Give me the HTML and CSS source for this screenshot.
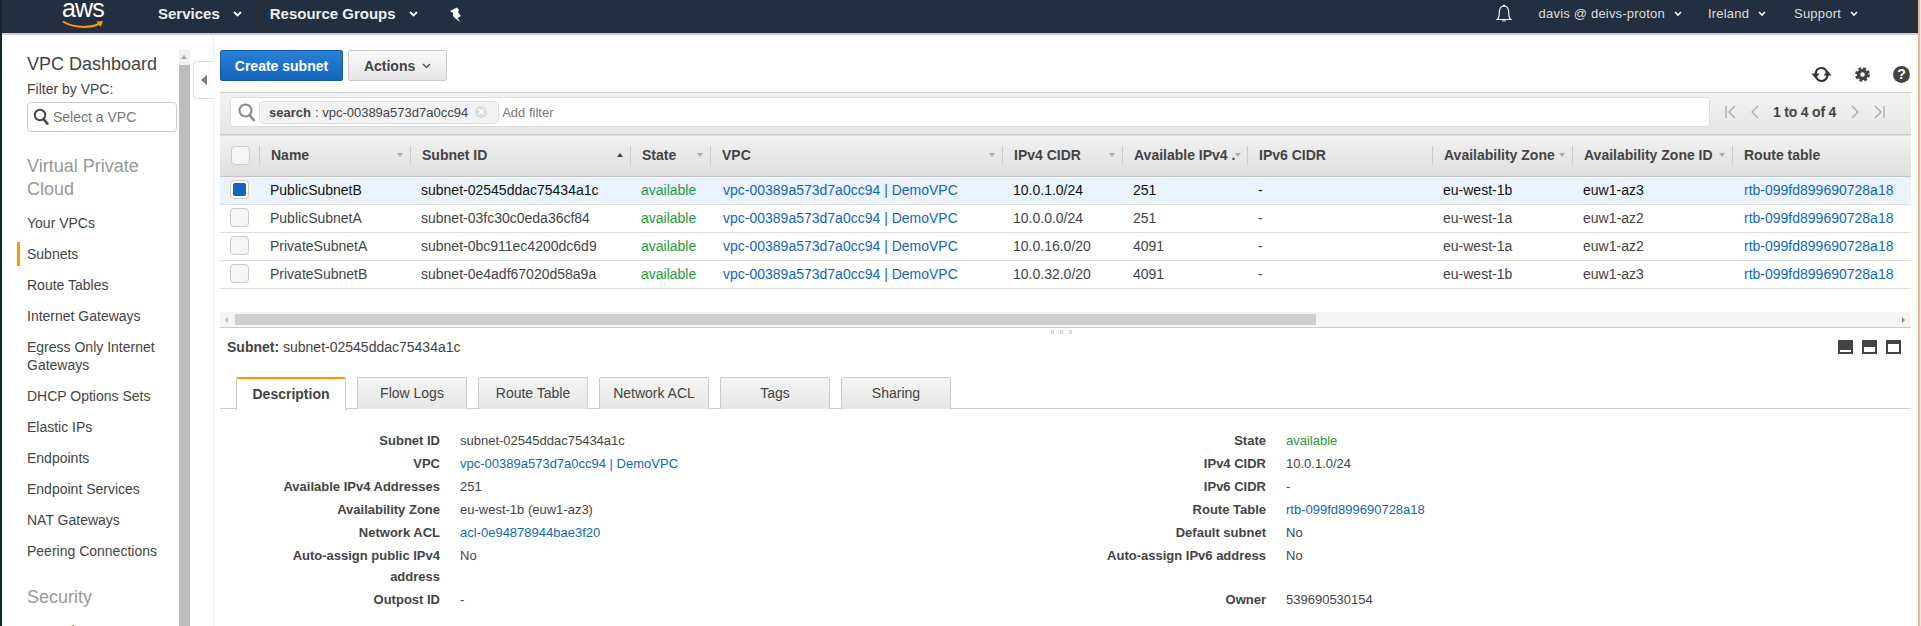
FILE: index.html
```html
<!DOCTYPE html>
<html lang="en">
<head>
    <meta charset="UTF-8">
    <title>Subnets | VPC Management Console</title>
    <link rel="stylesheet" href="styles.css">
</head>
<body>
    <header class="topnav">
        <div class="logo">
            <span class="logo-text">aws</span>
            <svg class="logo-smile" width="42" height="9" viewBox="0 0 42 9"><path d="M1 1.500C10 7.500 27 9 38 3.500" fill="none" stroke="#f90" stroke-width="2"/><path d="M34.500 1.500L41 1L38.500 7Z" fill="#f90"/></svg>
        </div>
        <a class="nav-main nav-services">Services</a>
        <svg class="caret caret-main" width="9" height="6" viewBox="0 0 9 6"><path d="M1 1L4.500 4.500L8 1" fill="none" stroke="#fff" stroke-width="1.800"/></svg>
        <a class="nav-main nav-groups">Resource Groups</a>
        <svg class="caret caret-main" width="9" height="6" viewBox="0 0 9 6"><path d="M1 1L4.500 4.500L8 1" fill="none" stroke="#fff" stroke-width="1.800"/></svg>
        <svg class="pin" width="13" height="16" viewBox="0 0 13 16"><path d="M0 4L7 0.500L9 3L8 5L11 9L7.500 11L10.500 15.500L5.500 11.500L3 9L3 6Z" fill="#fff"/></svg>
        <div class="nav-right">
            <svg class="bell" width="16" height="19" viewBox="0 0 16 19"><path d="M2.500 14C3.500 11.500 3 9 3.500 6.500C4 3.500 6 2 8 2C10 2 12 3.500 12.500 6.500C13 9 12.500 11.500 13.500 14L15 15.500H1Z" fill="none" stroke="#fff" stroke-width="1.100"/><path d="M6 16.500C6.500 18 9.500 18 10 16.500Z" fill="#fff"/><circle cx="8" cy="1.500" r="1" fill="#fff"/></svg>
            <a class="nav-small nav-user">davis @ deivs-proton</a>
            <svg class="caret" width="8" height="5" viewBox="0 0 8 5"><path d="M1 1L4 4L7 1" fill="none" stroke="#fff" stroke-width="1.600"/></svg>
            <a class="nav-small nav-region">Ireland</a>
            <svg class="caret" width="8" height="5" viewBox="0 0 8 5"><path d="M1 1L4 4L7 1" fill="none" stroke="#fff" stroke-width="1.600"/></svg>
            <a class="nav-small nav-support">Support</a>
            <svg class="caret" width="8" height="5" viewBox="0 0 8 5"><path d="M1 1L4 4L7 1" fill="none" stroke="#fff" stroke-width="1.600"/></svg>
        </div>
    </header>

    <div class="layout">
        <nav class="sidebar">
            <h2 class="side-title">VPC Dashboard</h2>
            <div class="side-filter-label">Filter by VPC:</div>
            <div class="side-select">
                <svg width="17" height="18" viewBox="0 0 17 18"><circle cx="7" cy="7" r="5.200" fill="none" stroke="#444" stroke-width="2"/><path d="M10.500 11L15 16.500" stroke="#444" stroke-width="2.600"/></svg>
                <span>Select a VPC</span>
            </div>
            <h3 class="side-heading side-heading-first">Virtual Private Cloud</h3>
            <ul class="side-list">
                <li>Your VPCs</li>
                <li class="active">Subnets</li>
                <li>Route Tables</li>
                <li>Internet Gateways</li>
                <li>Egress Only Internet Gateways</li>
                <li>DHCP Options Sets</li>
                <li>Elastic IPs</li>
                <li>Endpoints</li>
                <li>Endpoint Services</li>
                <li>NAT Gateways</li>
                <li>Peering Connections</li>
            </ul>
            <h3 class="side-heading">Security</h3>
            <ul class="side-list">
                <li>Network ACLs</li>
            </ul>
        </nav>
        <div class="side-scroll">
            <div class="side-scroll-up"></div>
            <div class="side-scroll-thumb"></div>
        </div>
        <div class="collapse-col">
            <div class="collapse-tab"><span class="arrow-left"></span></div>
        </div>

        <main class="main">
            <div class="toolbar">
                <button class="btn btn-primary">Create subnet</button>
                <button class="btn btn-default">Actions <svg width="9" height="6" viewBox="0 0 9 6"><path d="M1 1L4.500 4.500L8 1" fill="none" stroke="#555" stroke-width="1.500"/></svg></button>
                <div class="tool-icons">
                    <svg width="21" height="17" viewBox="0 0 21 17"><path d="M16 6.500C15 3.500 13 2 10.500 2C7.500 2 5 4 4.500 8" fill="none" stroke="#333" stroke-width="2.200"/><path d="M0.500 7.500H8.500L4.500 12.500Z" fill="#333"/><path d="M5 10.500C6 13.500 8 15 10.500 15C13.500 15 16 13 16.500 9" fill="none" stroke="#333" stroke-width="2.200"/><path d="M12.500 9.500H20.500L16.500 4.500Z" fill="#333"/></svg>
                    <svg width="15" height="15" viewBox="0 0 15 15"><circle cx="7.500" cy="7.500" r="4" fill="none" stroke="#444" stroke-width="3.400"/><circle cx="7.500" cy="7.500" r="6.200" fill="none" stroke="#444" stroke-width="2.400" stroke-dasharray="2.800 2.070"/></svg>
                    <span class="help-icon">?</span>
                </div>
            </div>

            <div class="filter-bar">
                <div class="filter-input">
                    <svg width="18" height="19" viewBox="0 0 18 19"><circle cx="7.500" cy="7.500" r="6" fill="none" stroke="#888" stroke-width="2"/><path d="M11.500 12L16.500 18" stroke="#888" stroke-width="2.600"/></svg>
                    <span class="token"><b>search</b> : vpc-00389a573d7a0cc94<span class="token-x">×</span></span>
                    <span class="add-filter">Add filter</span>
                </div>
                <div class="pager">
                    <svg width="11" height="14" viewBox="0 0 11 14"><path d="M1 1V13M10 1L4 7L10 13" fill="none" stroke="#aaa" stroke-width="1.300"/></svg>
                    <svg class="pager-prev" width="9" height="14" viewBox="0 0 9 14"><path d="M8 1L2 7L8 13" fill="none" stroke="#aaa" stroke-width="1.300"/></svg>
                    <b class="pager-text">1 to 4 of 4</b>
                    <svg class="pager-next" width="9" height="14" viewBox="0 0 9 14"><path d="M1 1L7 7L1 13" fill="none" stroke="#aaa" stroke-width="1.300"/></svg>
                    <svg class="pager-last" width="11" height="14" viewBox="0 0 11 14"><path d="M10 1V13M1 1L7 7L1 13" fill="none" stroke="#aaa" stroke-width="1.300"/></svg>
                </div>
            </div>

            <div class="table-wrap">
                <table class="grid">
                    <colgroup>
                        <col class="c-check"><col class="c-name"><col class="c-id"><col class="c-state"><col class="c-vpc"><col class="c-cidr"><col class="c-avail"><col class="c-cidr6"><col class="c-az"><col class="c-azid"><col class="c-route">
                    </colgroup>
                    <thead>
                        <tr>
                            <th><div class="th"><span class="check"></span></div></th>
                            <th><div class="th">Name<span class="sort"></span></div></th>
                            <th><div class="th">Subnet ID<span class="sort sort-up"></span></div></th>
                            <th><div class="th">State<span class="sort"></span></div></th>
                            <th><div class="th">VPC<span class="sort"></span></div></th>
                            <th><div class="th">IPv4 CIDR<span class="sort"></span></div></th>
                            <th><div class="th">Available IPv4 .<span class="sort"></span></div></th>
                            <th><div class="th">IPv6 CIDR</div></th>
                            <th><div class="th">Availability Zone<span class="sort"></span></div></th>
                            <th><div class="th">Availability Zone ID<span class="sort"></span></div></th>
                            <th><div class="th th-last">Route table</div></th>
                        </tr>
                    </thead>
                    <tbody>
                        <tr class="selected">
                            <td><span class="check checked"></span></td>
                            <td>PublicSubnetB</td>
                            <td>subnet-02545ddac75434a1c</td>
                            <td class="ok">available</td>
                            <td class="vpc"><a>vpc-00389a573d7a0cc94 | DemoVPC</a></td>
                            <td>10.0.1.0/24</td>
                            <td>251</td>
                            <td>-</td>
                            <td>eu-west-1b</td>
                            <td>euw1-az3</td>
                            <td><a>rtb-099fd899690728a18</a></td>
                        </tr>
                        <tr>
                            <td><span class="check"></span></td>
                            <td>PublicSubnetA</td>
                            <td>subnet-03fc30c0eda36cf84</td>
                            <td class="ok">available</td>
                            <td class="vpc"><a>vpc-00389a573d7a0cc94 | DemoVPC</a></td>
                            <td>10.0.0.0/24</td>
                            <td>251</td>
                            <td>-</td>
                            <td>eu-west-1a</td>
                            <td>euw1-az2</td>
                            <td><a>rtb-099fd899690728a18</a></td>
                        </tr>
                        <tr>
                            <td><span class="check"></span></td>
                            <td>PrivateSubnetA</td>
                            <td>subnet-0bc911ec4200dc6d9</td>
                            <td class="ok">available</td>
                            <td class="vpc"><a>vpc-00389a573d7a0cc94 | DemoVPC</a></td>
                            <td>10.0.16.0/20</td>
                            <td>4091</td>
                            <td>-</td>
                            <td>eu-west-1a</td>
                            <td>euw1-az2</td>
                            <td><a>rtb-099fd899690728a18</a></td>
                        </tr>
                        <tr>
                            <td><span class="check"></span></td>
                            <td>PrivateSubnetB</td>
                            <td>subnet-0e4adf67020d58a9a</td>
                            <td class="ok">available</td>
                            <td class="vpc"><a>vpc-00389a573d7a0cc94 | DemoVPC</a></td>
                            <td>10.0.32.0/20</td>
                            <td>4091</td>
                            <td>-</td>
                            <td>eu-west-1b</td>
                            <td>euw1-az3</td>
                            <td><a>rtb-099fd899690728a18</a></td>
                        </tr>
                    </tbody>
                </table>
            </div>

            <div class="hscroll">
                <span class="arrow-small-left"></span>
                <div class="hscroll-thumb"></div>
                <span class="arrow-small-right"></span>
            </div>
            <div class="splitter"><i></i><i></i><i></i></div>

            <div class="detail-head">
                <div><b>Subnet:</b> subnet-02545ddac75434a1c</div>
                <div class="pane-icons">
                    <span class="pane-icon pane-a"></span>
                    <span class="pane-icon pane-b"></span>
                    <span class="pane-icon pane-c"></span>
                </div>
            </div>

            <div class="tabs">
                <a class="tab active">Description</a>
                <a class="tab">Flow Logs</a>
                <a class="tab">Route Table</a>
                <a class="tab">Network ACL</a>
                <a class="tab">Tags</a>
                <a class="tab">Sharing</a>
            </div>

            <div class="details">
                <div class="lbl">Subnet ID</div><div class="val">subnet-02545ddac75434a1c</div>
                <div class="lbl">State</div><div class="val ok">available</div>
                <div class="lbl">VPC</div><div class="val"><a>vpc-00389a573d7a0cc94 | DemoVPC</a></div>
                <div class="lbl">IPv4 CIDR</div><div class="val">10.0.1.0/24</div>
                <div class="lbl">Available IPv4 Addresses</div><div class="val">251</div>
                <div class="lbl">IPv6 CIDR</div><div class="val">-</div>
                <div class="lbl">Availability Zone</div><div class="val">eu-west-1b (euw1-az3)</div>
                <div class="lbl">Route Table</div><div class="val"><a>rtb-099fd899690728a18</a></div>
                <div class="lbl">Network ACL</div><div class="val"><a>acl-0e94878944bae3f20</a></div>
                <div class="lbl">Default subnet</div><div class="val">No</div>
                <div class="lbl">Auto-assign public IPv4 address</div><div class="val">No</div>
                <div class="lbl">Auto-assign IPv6 address</div><div class="val">No</div>
                <div class="lbl">Outpost ID</div><div class="val">-</div>
                <div class="lbl">Owner</div><div class="val">539690530154</div>
            </div>
        </main>
    </div>
</body>
</html>
```

FILE: styles.css
```css
* {
    box-sizing: border-box;
}

html {
    background: #e8e8e8;
}

body {
    font-family: "Liberation Sans", Arial, sans-serif;
    font-size: 14px;
    color: #444;
    background: #fff;
    width: 1920px;
    height: 626px;
    margin: 0;
    border-left: 2px solid #10262b;
    border-right: 2px solid #f4b48c;
    overflow: hidden;
}

a {
    color: #1166bb;
}

/* top bar */
.topnav {
    display: flex;
    align-items: center;
    height: 35px;
    padding-bottom: 6px;
    background: #232f3e;
    border-bottom: 2px solid #ccc;
    color: #fff;
}

.logo {
    display: flex;
    flex-direction: column;
    width: 42px;
    height: 28px;
    margin-left: 60px;
    margin-top: 6px;
}

.logo-text {
    font-size: 25px;
    line-height: 11px;
    letter-spacing: -0.8px;
    height: 17px;
}

.logo-smile {
    display: block;
}

.nav-main {
    font-size: 15px;
    font-weight: bold;
    color: #eee;
}

.nav-services {
    margin-left: 54px;
}

.nav-groups {
    margin-left: 28px;
}

.caret-main {
    margin-left: 13px;
}

.pin {
    margin-left: 32px;
    margin-top: 3px;
}

.nav-right {
    display: flex;
    align-items: center;
    margin-left: auto;
    padding-right: 60px;
}

.nav-right .caret {
    margin-left: 9px;
}

.bell {
    margin-right: 27px;
}

.nav-small {
    font-size: 13px;
    letter-spacing: 0.2px;
    color: #ddd;
}

.nav-region {
    margin-left: 26px;
}

.nav-support {
    margin-left: 28px;
}

/* left menu */
.layout {
    display: flex;
    height: 591px;
}

.sidebar {
    width: 177px;
    flex: none;
    padding: 18px 2px 0 25px;
    overflow: hidden;
}

.side-title {
    margin: 0;
    font-size: 18px;
    font-weight: normal;
    line-height: 22px;
}

.side-filter-label {
    margin-top: 5px;
    line-height: 18px;
}

.side-select {
    display: flex;
    align-items: center;
    gap: 3px;
    height: 30px;
    margin-top: 4px;
    padding-left: 5px;
    border: 1px solid #ccc;
    border-radius: 4px;
    color: #777;
}

.side-heading {
    margin: 23px 0 0;
    font-size: 18px;
    font-weight: normal;
    line-height: 23px;
    color: #999;
}

.side-heading-first {
    margin-top: 23px;
}

.side-list {
    list-style: none;
    margin: 10px 0 0;
    padding: 0;
    display: flex;
    flex-direction: column;
    gap: 7px;
}

.side-list li {
    padding: 3px 0;
    line-height: 18px;
}

.side-list li.active {
    margin-left: -10px;
    padding-left: 7px;
    border-left: 3px solid #f90;
}

.side-scroll {
    width: 11px;
    flex: none;
    margin-top: 15px;
    display: flex;
    flex-direction: column;
}

.side-scroll-up {
    height: 15px;
    background: #f1f1f1;
    position: relative;
}

.side-scroll-up::after {
    content: "";
    position: absolute;
    left: 2px;
    top: 5px;
    border: 3.500px solid transparent;
    border-top: 0;
    border-bottom: 4px solid #aaa;
}

.side-scroll-thumb {
    flex: 1;
    background: #bdbdbd;
}

.collapse-col {
    width: 24px;
    flex: none;
    margin-right: 6px;
    padding: 26px 0 0 3px;
    border-right: 1px solid #eee;
}

.collapse-tab {
    display: flex;
    align-items: center;
    justify-content: center;
    width: 21px;
    height: 38px;
    background: #fff;
    border: 1px solid #ddd;
    border-right: 0;
    border-radius: 4px 0 0 4px;
}

.arrow-left {
    border: 5px solid transparent;
    border-left: 0;
    border-right: 6px solid #777;
}

/* main column */
.main {
    width: 1691px;
    flex: none;
}

.toolbar {
    display: flex;
    align-items: flex-start;
    height: 57px;
    padding-top: 15px;
}

.btn {
    height: 31px;
    font-family: inherit;
    font-size: 14px;
    font-weight: bold;
    border-radius: 2px;
    cursor: pointer;
}

.btn-primary {
    width: 123px;
    color: #fff;
    background: linear-gradient(#2a7fd6, #1166bb);
    border: 1px solid #125ca5;
}

.btn-default {
    width: 99px;
    margin-left: 5px;
    color: #444;
    background: linear-gradient(#f9f9f9, #e6e6e6);
    border: 1px solid #ccc;
}

.btn-default svg {
    margin-left: 3px;
    vertical-align: 2px;
}

.tool-icons {
    display: flex;
    align-items: center;
    gap: 23px;
    margin-left: auto;
    margin-top: 16px;
    padding-right: 1px;
}

.help-icon {
    width: 17px;
    height: 17px;
    border-radius: 50%;
    background: #444;
    color: #fff;
    font-size: 14px;
    font-weight: bold;
    line-height: 17px;
    text-align: center;
}

.filter-bar {
    display: flex;
    align-items: flex-start;
    height: 42px;
    padding: 4px 0 0 10px;
    background: linear-gradient(#f2f2f2, #e6e6e6);
    border-top: 1px solid #ccc;
}

.filter-input {
    display: flex;
    align-items: center;
    width: 1480px;
    height: 30px;
    padding-left: 7px;
    background: #fff;
    border: 1px solid #ddd;
    border-radius: 4px;
}

.token {
    display: flex;
    align-items: center;
    gap: 4px;
    height: 23px;
    margin-left: 3px;
    padding: 0 11px 0 9px;
    font-size: 13px;
    background: #f2f2f2;
    border: 1px solid #ddd;
    border-radius: 5px;
}

.token-x {
    width: 12px;
    height: 12px;
    margin-left: 3px;
    border-radius: 50%;
    background: #ddd;
    color: #fff;
    font-size: 12px;
    font-weight: bold;
    line-height: 12px;
    text-align: center;
}

.add-filter {
    margin-left: 3px;
    font-size: 13px;
    color: #777;
}

.pager {
    display: flex;
    align-items: center;
    height: 30px;
    margin-left: 15px;
}

.pager-prev {
    margin-left: 14px;
}

.pager-text {
    margin-left: 14px;
    letter-spacing: -0.2px;
}

.pager-next {
    margin-left: 15px;
}

.pager-last {
    margin-left: 14px;
}

/* subnets table */
.table-wrap {
    overflow: hidden;
    height: 178px;
    background: #fff;
}

.grid {
    width: 1691px;
    table-layout: fixed;
    border-collapse: collapse;
}

.c-check { width: 40px; }
.c-name { width: 151px; }
.c-id { width: 220px; }
.c-state { width: 80px; }
.c-vpc { width: 292px; }
.c-cidr { width: 120px; }
.c-avail { width: 125px; }
.c-cidr6 { width: 185px; }
.c-az { width: 140px; }
.c-azid { width: 160px; }
.c-route { width: 178px; }

.grid thead tr {
    height: 42px;
    background: linear-gradient(#f2f2f2, #dedede);
    border-top: 1px solid #ccc;
    border-bottom: 1px solid #c4c4c4;
}

.grid th {
    padding: 0 0 1px;
    font-weight: bold;
    text-align: left;
}

.th {
    display: flex;
    align-items: center;
    justify-content: space-between;
    height: 19px;
    padding: 0 7px 0 11px;
    border-right: 1px solid #ccc;
    white-space: nowrap;
    overflow: hidden;
}

.th-last {
    border-right: 0;
}

.sort {
    flex: none;
    border: 3.500px solid transparent;
    border-bottom: 0;
    border-top: 4px solid #aaa;
}

.sort-up {
    border-top: 0;
    border-bottom: 4px solid #444;
}

.grid td {
    height: 28px;
    padding: 0 0 2px 10px;
    white-space: nowrap;
    border-bottom: 1px solid #ddd;
}

.grid td.vpc {
    padding-left: 12px;
}

.grid td:last-child {
    padding-left: 11px;
}

.selected td {
    background: #eaf3fe;
    color: #111;
}

.selected td a {
    color: #1166bb;
}

.ok {
    color: #1d9c3f;
}

.selected td.ok {
    color: #1d9c3f;
}

.check {
    display: block;
    width: 19px;
    height: 19px;
    background: #f5f5f5;
    border: 1px solid #ccc;
    border-radius: 4px;
}

.checked {
    padding: 2px;
    background: #fff;
    background-clip: padding-box;
}

.checked::before {
    content: "";
    display: block;
    width: 13px;
    height: 13px;
    background: #1166bb;
    border-radius: 2px;
}

.hscroll {
    display: flex;
    align-items: center;
    height: 16px;
    padding-left: 15px;
    background: #f4f4f4;
    border-bottom: 1px solid #ccc;
}

.hscroll-thumb {
    width: 1081px;
    height: 11px;
    background: #cfcfcf;
}

.arrow-small-left {
    border: 3px solid transparent;
    border-left: 0;
    border-right: 3px solid #bbb;
    margin-left: -10px;
    margin-right: 7px;
}

.arrow-small-right {
    border: 3px solid transparent;
    border-right: 0;
    border-left: 3px solid #888;
    margin-left: auto;
    margin-right: 6px;
}

.splitter {
    display: flex;
    justify-content: center;
    align-items: center;
    gap: 6px;
    height: 8px;
    padding-right: 8px;
}

.splitter i {
    width: 3px;
    height: 4px;
    border: 1px solid #ccc;
    border-radius: 1px 1px 0 0;
}

.detail-head {
    display: flex;
    justify-content: space-between;
    align-items: center;
    height: 18px;
    margin-top: 2px;
    padding: 0 10px 0 7px;
}

.pane-icons {
    display: flex;
    gap: 9px;
}

.pane-icon {
    display: block;
    width: 15px;
    height: 14px;
    background: #444;
    position: relative;
}

.pane-icon::after {
    content: "";
    position: absolute;
    left: 2px;
    right: 2px;
    bottom: 2px;
    background: #fff;
}

.pane-a::after { height: 2px; }
.pane-b::after { height: 5px; }
.pane-c::after { height: 8px; }

.tabs {
    display: flex;
    gap: 11px;
    height: 32px;
    margin-top: 21px;
    padding-left: 16px;
    border-bottom: 1px solid #ccc;
}

.tab {
    width: 110px;
    height: 32px;
    color: #444;
    line-height: 30px;
    text-align: center;
    background: linear-gradient(#f5f5f5, #e6e6e6);
    border: 1px solid #ccc;
    border-bottom: 0;
    border-radius: 2px 2px 0 0;
}

.tab.active {
    height: 33px;
    font-weight: bold;
    background: #fff;
    border-top: 2px solid #f90;
}

.details {
    display: grid;
    grid-template-columns: 220px 566px 220px 1fr;
    column-gap: 20px;
    row-gap: 2px;
    padding-top: 21px;
    font-size: 13px;
    line-height: 21px;
}

.lbl {
    padding-left: 50px;
    font-weight: bold;
    text-align: right;
}
```
